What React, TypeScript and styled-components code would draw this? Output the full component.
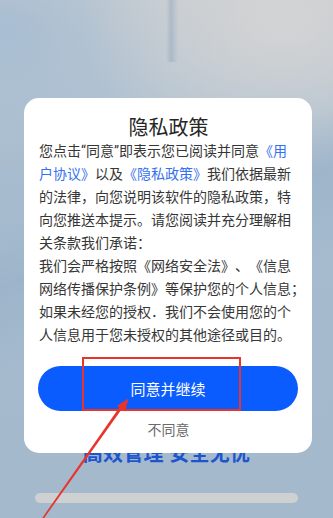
import React from "react";
import styled, { createGlobalStyle } from "styled-components";

const Global = createGlobalStyle`
  html, body { margin: 0; padding: 0; }
  body {
    font-family: "Roboto", "Noto Sans CJK SC", sans-serif;
    -webkit-font-smoothing: antialiased;
  }
`;

const Screen = styled.div`
  position: relative;
  width: 333px;
  height: 518px;
  overflow: hidden;
  background:
    linear-gradient(to right, transparent 166px, rgba(150, 170, 192, 0.55) 171px, transparent 178px) 0 0 / 333px 62px no-repeat,
    linear-gradient(160deg, transparent 35%, rgba(140, 168, 196, 0.35) 45%, transparent 58%),
    radial-gradient(ellipse 60% 30% at 85% 4%, rgba(212, 212, 212, 0.95), rgba(212, 212, 212, 0) 100%),
    radial-gradient(ellipse 55% 25% at 0% 6%, rgba(165, 188, 210, 0.9), rgba(165, 188, 210, 0) 100%),
    linear-gradient(to bottom, #c4cbd1 0%, #b3c3d1 18%, #a6bbce 35%, #a4b9cc 100%);
`;

const BackgroundContent = styled.div`
  height: 100%;
  box-sizing: border-box;
  display: flex;
  flex-direction: column;
  justify-content: flex-end;
  align-items: center;
  padding-bottom: 15px;
`;

const Slogan = styled.div`
  font-size: 20px;
  line-height: 20px;
  font-weight: 700;
  color: #1d55cf;
  margin-bottom: 29px;
  letter-spacing: 0.3px;
`;

const HomeBar = styled.div`
  width: 263px;
  height: 10px;
  border-radius: 5px;
  background: #cfd0d2;
`;

const Overlay = styled.div`
  position: absolute;
  inset: 0;
  padding: 98px 0 0 24px;
`;

const Card = styled.div`
  width: 288px;
  box-sizing: border-box;
  background: #ffffff;
  border-radius: 15px;
  padding: 18px 14px 13px 15px;
  display: flex;
  flex-direction: column;
`;

const Title = styled.div`
  font-size: 20px;
  line-height: 24px;
  color: #262626;
  text-align: center;
`;

const Body = styled.div`
  font-size: 14px;
  line-height: 23px;
  color: #363636;
  text-spacing-trim: space-all;
`;

const Line = styled.span`
  display: block;
  white-space: nowrap;
`;

const Link = styled.span`
  color: #3571ee;
`;

const PrimaryButton = styled.button`
  margin: 19px 0 0 -1px;
  height: 45px;
  width: 260px;
  border: none;
  border-radius: 23px;
  background: #0b5cff;
  color: #ffffff;
  font-family: inherit;
  font-size: 15px;
  padding: 0;
`;

const SecondaryButton = styled.button`
  margin-top: 9px;
  height: 20px;
  border: none;
  background: transparent;
  color: #6b6b6b;
  font-family: inherit;
  font-size: 14px;
  line-height: 20px;
  padding: 0;
`;

const Highlight = styled.div`
  position: absolute;
  left: 82px;
  top: 357px;
  width: 159px;
  height: 54px;
  box-sizing: border-box;
  border: 2px solid #e8342a;
  pointer-events: none;
`;

const Annotation = styled.svg`
  position: absolute;
  inset: 0;
  pointer-events: none;
`;

export default function App() {
  return (
    <>
      <Global />
      <Screen>
        <BackgroundContent>
          <Slogan>高效管理 安全无忧</Slogan>
          <HomeBar />
        </BackgroundContent>
        <Overlay>
          <Card>
            <Title>隐私政策</Title>
            <Body>
              <Line>
                您点击“同意”即表示您已阅读并同意<Link>《用</Link>
              </Line>
              <Line>
                <Link>户协议》</Link>以及<Link>《隐私政策》</Link>我们依据最新
              </Line>
              <Line>的法律，向您说明该软件的隐私政策，特</Line>
              <Line>向您推送本提示。请您阅读并充分理解相</Line>
              <Line>关条款我们承诺：</Line>
              <Line>我们会严格按照《网络安全法》、《信息</Line>
              <Line>网络传播保护条例》等保护您的个人信息；</Line>
              <Line>如果未经您的授权．我们不会使用您的个</Line>
              <Line>人信息用于您未授权的其他途径或目的。</Line>
            </Body>
            <PrimaryButton>同意并继续</PrimaryButton>
            <SecondaryButton>不同意</SecondaryButton>
          </Card>
        </Overlay>
        <Highlight />
        <Annotation width="333" height="518" viewBox="0 0 333 518">
          <polygon points="42.2,518 44.2,518 123.6,406.4 121.2,404.8" fill="#e8342a" />
          <polygon points="128.5,398.5 125.2,411.5 117.0,405.8" fill="#e8342a" />
        </Annotation>
      </Screen>
    </>
  );
}
